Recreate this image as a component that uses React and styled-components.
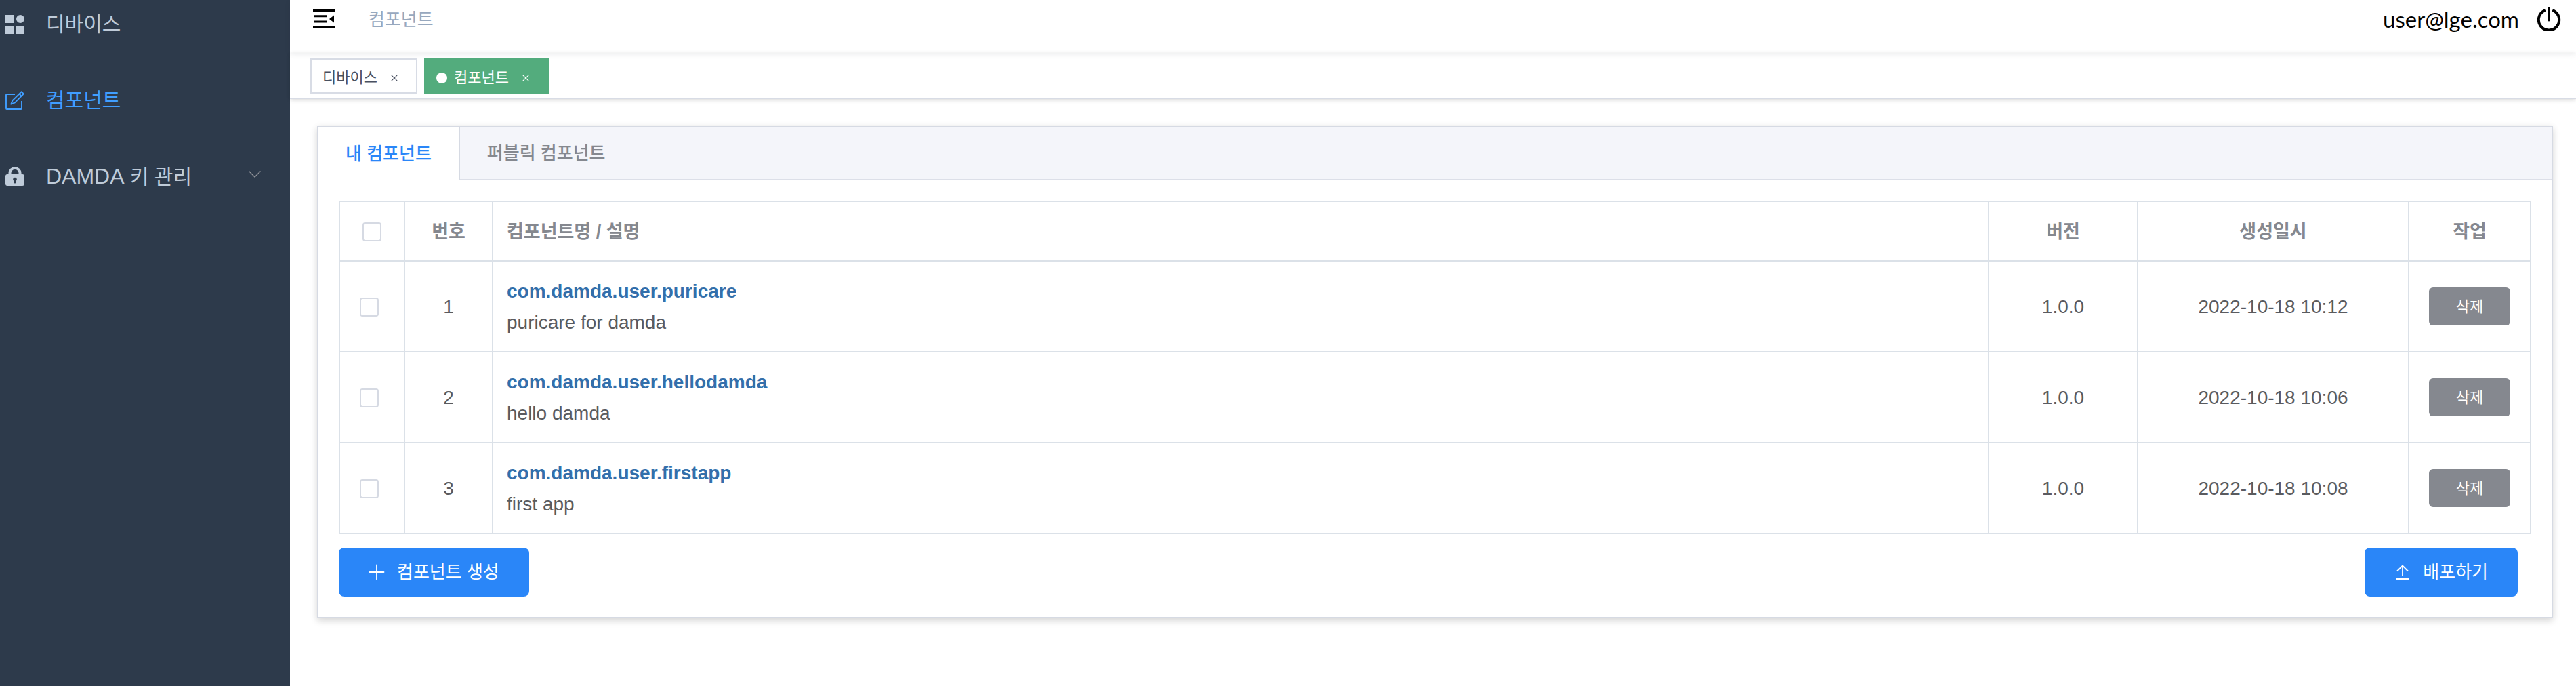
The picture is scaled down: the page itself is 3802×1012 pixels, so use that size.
import React from "react";
import styled, { createGlobalStyle } from "styled-components";

const sans = `"Liberation Sans", "Noto Sans CJK KR", sans-serif`;

const GlobalStyle = createGlobalStyle`
  *, *::before, *::after { box-sizing: border-box; }
  body { margin: 0; background: #fff; font-family: ${sans}; color: #5a5b5f; }
  button, input { font-family: inherit; }
  h1, p { margin: 0; }
`;

const Page = styled.div`
  display: flex;
  min-height: 100vh;
`;

const Sidebar = styled.nav`
  flex: 0 0 428px;
  background: #2d3a4b;
`;

const Menu = styled.ul`
  list-style: none;
  margin: 0;
  padding: 0;
`;

const MenuItem = styled.li`
  height: 112px;
  &:first-child { height: 92px; }
`;

const MenuLink = styled.a`
  display: flex;
  align-items: center;
  height: 72px;
  padding: 0 42px 0 8px;
  gap: 32px;
  font-size: 30px;
  line-height: 72px;
  text-decoration: none;
  color: ${(p) => (p.$active ? "#409eff" : "#bfcbd9")};
  ${MenuItem}:not(:first-child) & { height: 112px; }
  svg { flex: none; }
`;

const MenuText = styled.span`
  flex: 1;
`;

const Latin = styled.span`
  font-size: 32px;
`;

const Main = styled.div`
  flex: 1;
  min-width: 0;
`;

const Header = styled.header`
  display: flex;
  align-items: center;
  height: 78px;
  padding: 0 22px 22px 34px;
  box-shadow: 0 2px 8px rgba(0, 21, 41, 0.08);
`;

const IconButton = styled.button`
  display: flex;
  padding: 0;
  border: 0;
  background: none;
  color: #000;
`;

const Breadcrumb = styled.h1`
  margin-left: 50px;
  padding-top: 2px;
  font-size: 26px;
  font-weight: 400;
  line-height: 40px;
  color: #97a8be;
`;

const Account = styled.div`
  display: flex;
  align-items: center;
  gap: 26px;
  margin-left: auto;
  font-family: Lato, ${sans};
  font-size: 33px;
  line-height: 40px;
  color: #000;
`;

const TagBar = styled.div`
  display: flex;
  gap: 10px;
  height: 68px;
  padding: 8px 30px;
  border-bottom: 2px solid #d8dce5;
  box-shadow: 0 2px 6px rgba(0, 0, 0, 0.12), 0 0 6px rgba(0, 0, 0, 0.04);
`;

const Tag = styled.div`
  display: flex;
  align-items: center;
  height: 52px;
  padding: 6px 27px 0 16px;
  border: 2px solid ${(p) => (p.$active ? "#53ac7d" : "#d8dce5")};
  background: ${(p) => (p.$active ? "#53ac7d" : "#fff")};
  color: ${(p) => (p.$active ? "#fff" : "#495060")};
  font-size: 22px;
  line-height: 42px;
`;

const TagDot = styled.span`
  width: 16px;
  height: 16px;
  margin-right: 10px;
  border-radius: 50%;
  background: #fff;
`;

const TagClose = styled.button`
  display: flex;
  margin-left: 20px;
  padding: 0;
  border: 0;
  background: none;
  color: inherit;
`;

const Card = styled.main`
  margin: 40px 34px 0 40px;
  border: 2px solid #d6dae3;
  background: #fff;
  box-shadow: 0 4px 10px rgba(0, 0, 0, 0.14), 0 0 12px rgba(0, 0, 0, 0.04);
`;

const TabList = styled.div`
  display: flex;
  height: 78px;
  background: #f4f5fa;
  border-bottom: 2px solid #dcdfe8;
`;

const Tab = styled.button`
  height: ${(p) => (p.$active ? 78 : 76)}px;
  padding: 0 40px;
  border: 0;
  border-right: 2px solid ${(p) => (p.$active ? "#d6dae3" : "transparent")};
  background: ${(p) => (p.$active ? "#fff" : "transparent")};
  color: ${(p) => (p.$active ? "#2a86f8" : "#85888f")};
  font-size: 26px;
  font-weight: 500;
  line-height: 76px;
`;

const CardBody = styled.section`
  padding: 30px;
`;

const Table = styled.table`
  width: 100%;
  border-collapse: separate;
  border-spacing: 0;
  table-layout: fixed;
  border: 2px solid #dbe1e8;
  border-width: 2px 0 0 2px;
  font-size: 28px;
  line-height: 46px;
`;

const Col = styled.col`
  width: ${(p) => (p.$width ? `${p.$width}px` : "auto")};
`;

const Cell = styled.td`
  height: 134px;
  padding: 2px 20px 0;
  border: 2px solid #dbe1e8;
  border-width: 0 2px 2px 0;
  text-align: ${(p) => (p.$left ? "left" : "center")};
`;

const HeadCell = styled(Cell).attrs({ as: "th", scope: "col" })`
  height: 88px;
  font-size: 27px;
  font-weight: 700;
  color: #85888f;
`;

const CheckCell = styled(Cell)`
  padding: 2px 8px 0 0;
`;

const Checkbox = styled.input.attrs({ type: "checkbox" })`
  appearance: none;
  display: block;
  width: 28px;
  height: 28px;
  margin: 0 auto;
  border: 2px solid #d6dae3;
  border-radius: 4px;
  background: #fff;
`;

const NameLink = styled.a`
  color: #336fab;
  font-weight: 700;
  text-decoration: none;
`;

const ActionCell = styled(Cell)`
  padding: 0;
`;

const DeleteButton = styled.button`
  display: block;
  width: 120px;
  height: 56px;
  margin: 0 auto;
  padding: 0 0 4px;
  border: 0;
  border-radius: 6px;
  background: #85888f;
  color: #fff;
  font-size: 22px;
`;

const Actions = styled.div`
  display: flex;
  justify-content: space-between;
  margin-top: 20px;
  padding-right: 20px;
`;

const PrimaryButton = styled.button`
  display: flex;
  align-items: center;
  gap: 16px;
  height: 72px;
  padding: 0 44px 0 42px;
  border: 0;
  border-radius: 8px;
  background: #2a86f8;
  color: #fff;
  font-size: 26px;
  line-height: 72px;
`;

const Line = ({ size = 28, box = 28, width = 2, children, ...rest }) => (
  <svg width={size} height={size} viewBox={`0 0 ${box} ${box}`} fill="none" stroke="currentColor" strokeWidth={width} aria-hidden="true" {...rest}>
    {children}
  </svg>
);

const DeviceIcon = () => (
  <svg width="28" height="28" viewBox="0 0 28 28" fill="currentColor" aria-hidden="true">
    <path d="M0 0h12v12H0zM0 16h12v12H0zM16 16h12v12H16z" />
    <circle cx="22" cy="6" r="6" />
  </svg>
);

const EditIcon = () => (
  <Line width={1.9} strokeLinejoin="round">
    <path d="M14 5H2a1 1 0 0 0-1 1v20a1 1 0 0 0 1 1h21a1 1 0 0 0 1-1V15" />
    <path d="M23.7 1.200l3.200 3.200-12.900 12.900-5.700 2.300 2.200-5.500zM20.400 4.500l3.200 3.200" />
  </Line>
);

const LockIcon = () => (
  <svg width="28" height="28" viewBox="0 0 28 28" aria-hidden="true">
    <path fill="currentColor" fillRule="evenodd" d="M4.500 11V9a9.500 9 0 0 1 19 0v2H25a3 3 0 0 1 3 3v11a3 3 0 0 1-3 3H3a3 3 0 0 1-3-3V14a3 3 0 0 1 3-3zm4 0h11V9a5.500 5 0 0 0-11 0zM12.500 21V23a1.500 1.500 0 0 0 3 0v-2a2.800 2.800 0 1 0-3 0z" />
  </svg>
);

const ChevronIcon = () => (
  <Line size={20} box={20} width={1.3} stroke="#909399">
    <path d="M1.500 2.500L10 11l8.500-8.500" />
  </Line>
);

const FoldIcon = () => (
  <svg width="32" height="28" viewBox="0 0 32 28" fill="currentColor" aria-hidden="true">
    <path d="M0 0h32v3H0zM1 8.200h19.500v3H1zM1 16.500h19.500v3H1zM0 25h32v3H0zM31 8.500v11L24 14z" />
  </svg>
);

const PowerIcon = () => (
  <Line size={36} box={36} width={4} strokeLinecap="round">
    <path d="M18 2.500v17M11 5.800a15.200 15.200 0 1 0 14 0" />
  </Line>
);

const CloseIcon = () => (
  <Line size={10} box={10} width={1.2}>
    <path d="M.8.8l8.400 8.400M9.200.8L.8 9.200" />
  </Line>
);

const PlusIcon = () => (
  <Line width={1.8} strokeLinecap="round">
    <path d="M14 3.500v21M3.500 14h21" />
  </Line>
);

const UploadIcon = () => (
  <Line width={1.8}>
    <path d="M14 19V5M6 12.500L14 4.500l8 8M4 24h20" />
  </Line>
);

const menu = [
  { label: "디바이스", Icon: DeviceIcon },
  { label: "컴포넌트", Icon: EditIcon, active: true },
  { latin: "DAMDA", label: " 키 관리", Icon: LockIcon, expandable: true },
];

const components = [
  { id: 1, name: "com.damda.user.puricare", description: "puricare for damda", version: "1.0.0", created: "2022-10-18 10:12" },
  { id: 2, name: "com.damda.user.hellodamda", description: "hello damda", version: "1.0.0", created: "2022-10-18 10:06" },
  { id: 3, name: "com.damda.user.firstapp", description: "first app", version: "1.0.0", created: "2022-10-18 10:08" },
];

export default function App() {
  return (
    <>
      <GlobalStyle />
      <Page>
        <Sidebar>
          <Menu>
            {menu.map(({ latin, label, Icon, active, expandable }) => (
              <MenuItem key={label}>
                <MenuLink href="#" $active={active}>
                  <Icon />
                  <MenuText>
                    {latin && <Latin>{latin}</Latin>}
                    {label}
                  </MenuText>
                  {expandable && <ChevronIcon />}
                </MenuLink>
              </MenuItem>
            ))}
          </Menu>
        </Sidebar>
        <Main>
          <Header>
            <IconButton aria-label="메뉴 접기"><FoldIcon /></IconButton>
            <Breadcrumb>컴포넌트</Breadcrumb>
            <Account>
              <span>user@lge.com</span>
              <IconButton aria-label="로그아웃"><PowerIcon /></IconButton>
            </Account>
          </Header>
          <TagBar>
            <Tag>
              디바이스
              <TagClose aria-label="디바이스 닫기"><CloseIcon /></TagClose>
            </Tag>
            <Tag $active>
              <TagDot />
              컴포넌트
              <TagClose aria-label="컴포넌트 닫기"><CloseIcon /></TagClose>
            </Tag>
          </TagBar>
          <Card>
            <TabList role="tablist">
              <Tab role="tab" aria-selected="true" $active>내 컴포넌트</Tab>
              <Tab role="tab" aria-selected="false">퍼블릭 컴포넌트</Tab>
            </TabList>
            <CardBody>
              <Table>
                <colgroup>
                  <Col $width={96} />
                  <Col $width={130} />
                  <Col />
                  <Col $width={220} />
                  <Col $width={400} />
                  <Col $width={180} />
                </colgroup>
                <thead>
                  <tr>
                    <HeadCell><Checkbox aria-label="전체 선택" /></HeadCell>
                    <HeadCell>번호</HeadCell>
                    <HeadCell $left>컴포넌트명 / 설명</HeadCell>
                    <HeadCell>버전</HeadCell>
                    <HeadCell>생성일시</HeadCell>
                    <HeadCell>작업</HeadCell>
                  </tr>
                </thead>
                <tbody>
                  {components.map((c) => (
                    <tr key={c.id}>
                      <CheckCell><Checkbox aria-label={c.name} /></CheckCell>
                      <Cell>{c.id}</Cell>
                      <Cell $left>
                        <NameLink href="#">{c.name}</NameLink>
                        <p>{c.description}</p>
                      </Cell>
                      <Cell>{c.version}</Cell>
                      <Cell>{c.created}</Cell>
                      <ActionCell><DeleteButton>삭제</DeleteButton></ActionCell>
                    </tr>
                  ))}
                </tbody>
              </Table>
              <Actions>
                <PrimaryButton><PlusIcon />컴포넌트 생성</PrimaryButton>
                <PrimaryButton><UploadIcon />배포하기</PrimaryButton>
              </Actions>
            </CardBody>
          </Card>
        </Main>
      </Page>
    </>
  );
}
